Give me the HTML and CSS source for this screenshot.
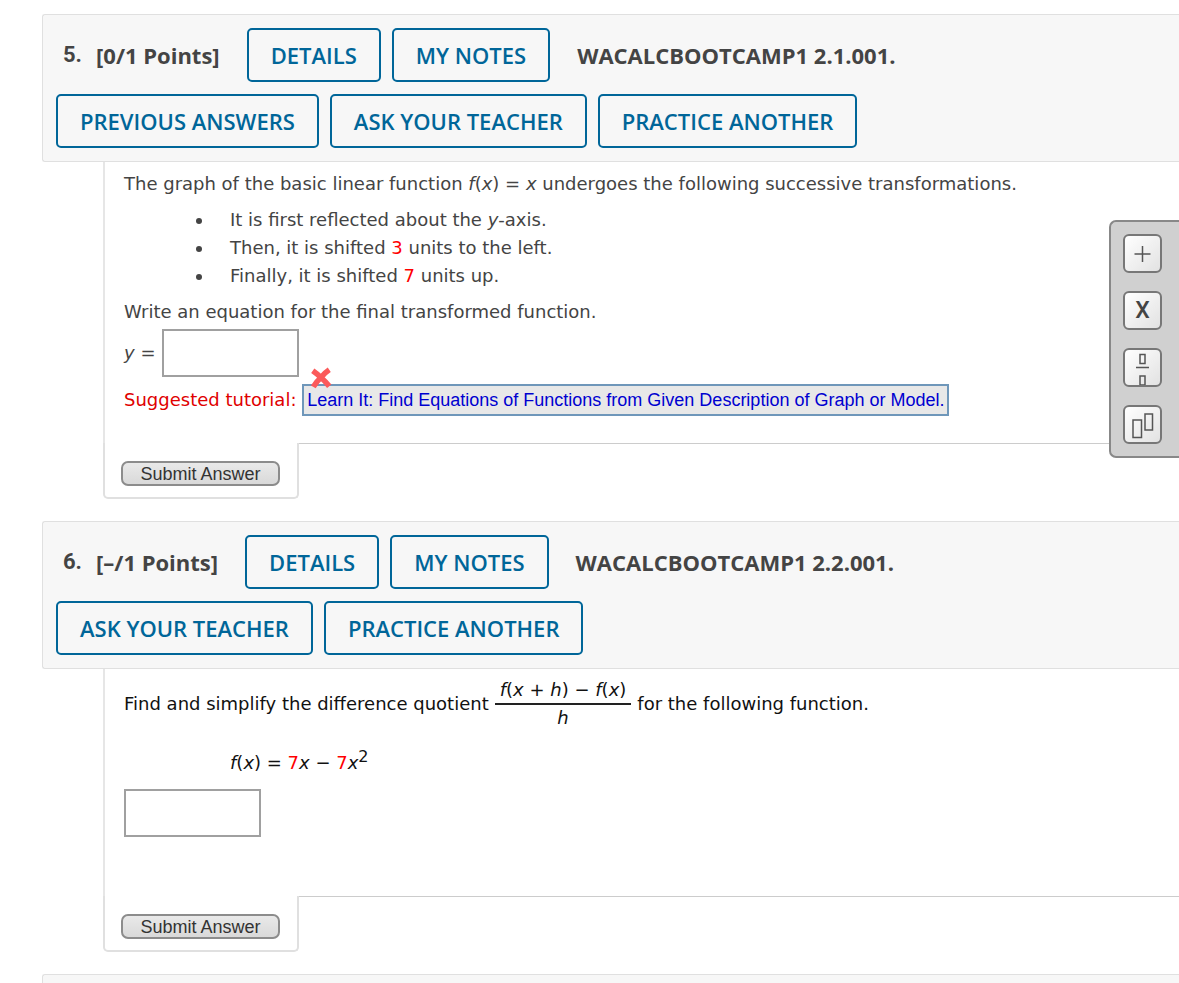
FILE: index.html
```
<!DOCTYPE html>
<html lang="en">
<head>
<meta charset="utf-8">
<title>Assignment</title>
<link rel="stylesheet" href="styles.css">
</head>
<body>
<main class="assignment">
  <section class="question">
    <header class="question-header">
      <div class="header-row">
        <h2 class="points"><span class="number">5.</span><span>[0/1 Points]</span></h2>
        <button class="action" type="button">DETAILS</button>
        <button class="action" type="button">MY NOTES</button>
        <strong class="code">WACALCBOOTCAMP1 2.1.001.</strong>
      </div>
      <div class="header-row">
        <button class="action" type="button">PREVIOUS ANSWERS</button>
        <button class="action" type="button">ASK YOUR TEACHER</button>
        <button class="action" type="button">PRACTICE ANOTHER</button>
      </div>
    </header>
    <form class="question-form">
      <div class="question-body">
        <p>The graph of the basic linear function <i>f</i>(<i>x</i>) = <i>x</i> undergoes the following successive transformations.</p>
        <ul class="steps">
          <li>It is first reflected about the <i>y</i>-axis.</li>
          <li>Then, it is shifted <span class="value">3</span> units to the left.</li>
          <li>Finally, it is shifted <span class="value">7</span> units up.</li>
        </ul>
        <p>Write an equation for the final transformed function.</p>
        <div class="answer-row">
          <label for="answer5"><i>y</i> =</label>
          <span class="answer-wrap">
            <input class="answer" id="answer5" type="text">
            <svg class="wrong" viewBox="0 0 20 20" role="img" aria-label="Incorrect">
              <path d="M2.500 3.500Q6 6 10 9.500Q13 5.500 17.500 2.500M3 18Q6 13 10 9.500Q14 13 17.500 17.500"/>
            </svg>
          </span>
        </div>
        <p class="tutorial">Suggested tutorial: <a class="tutorial-link" href="#tutorial">Learn It: Find Equations of Functions from Given Description of Graph or Model.</a></p>
      </div>
      <div class="question-foot">
        <div class="submit-tab"><button class="submit" type="button">Submit Answer</button></div>
        <div class="foot-line"></div>
      </div>
    </form>
  </section>

  <section class="question">
    <header class="question-header">
      <div class="header-row">
        <h2 class="points"><span class="number">6.</span><span>[–/1 Points]</span></h2>
        <button class="action" type="button">DETAILS</button>
        <button class="action" type="button">MY NOTES</button>
        <strong class="code">WACALCBOOTCAMP1 2.2.001.</strong>
      </div>
      <div class="header-row">
        <button class="action" type="button">ASK YOUR TEACHER</button>
        <button class="action" type="button">PRACTICE ANOTHER</button>
      </div>
    </header>
    <form class="question-form">
      <div class="question-body active">
        <p class="quotient-row">
          <span>Find and simplify the difference quotient</span>
          <span class="fraction"><span class="over"><i>f</i>(<i>x</i> + <i>h</i>) − <i>f</i>(<i>x</i>)</span><i class="under">h</i></span>
          <span>for the following function.</span>
        </p>
        <p class="formula"><i>f</i>(<i>x</i>) = <span class="value">7</span><i>x</i> − <span class="value">7</span><i>x</i><sup>2</sup></p>
        <input class="answer" type="text" aria-label="Difference quotient">
      </div>
      <div class="question-foot">
        <div class="submit-tab"><button class="submit" type="button">Submit Answer</button></div>
        <div class="foot-line"></div>
      </div>
    </form>
  </section>

  <section class="question">
    <header class="question-header"></header>
  </section>
</main>

<aside class="math-pad" aria-label="Math symbols">
  <button class="key" type="button" aria-label="Operations"><svg viewBox="0 0 35 35"><path d="M9.500 18h16M17.500 10v16"/></svg></button>
  <button class="key key-text" type="button">X</button>
  <button class="key" type="button" aria-label="Fraction"><svg viewBox="0 0 35 35"><path d="M15 4.500h5v9h-5zM11 17.500h13M15 26h5v9h-5z"/></svg></button>
  <button class="key" type="button" aria-label="Exponent"><svg viewBox="0 0 35 35"><path d="M8 13h8.500v17.500H8zM20 7h7.500v16H20z"/></svg></button>
</aside>
</body>
</html>
```
FILE: styles.css
```
* { box-sizing: border-box; }
html { overflow: hidden; }
body {
  height: 100vh;
  margin: 0;
  overflow: hidden;
  background: #fff;
  color: #444;
  font: 18px/28px "DejaVu Sans", sans-serif;
}
p, h2, ul { margin: 0; }
button, input { font: inherit; }
.assignment { padding: 14px 0 0 42px; }
.question { margin-bottom: 22px; }

.question-header {
  display: flex;
  flex-direction: column;
  gap: 12px;
  padding: 13px;
  background: #f7f7f7;
  border: 1px solid #e0e0e0;
  border-right: 0;
  border-radius: 3px 0 0 3px;
  font-family: "Open Sans", sans-serif;
}
.header-row { display: flex; align-items: center; gap: 11px; }
.points, .code {
  color: #444;
  font-size: 22px;
  font-weight: 700;
  white-space: nowrap;
}
.points { display: flex; gap: 14px; padding: 0 16px 0 7px; }
.number { font-family: Roboto, sans-serif; }
.code { padding-left: 16px; }
.action {
  height: 54px;
  padding: 0 22px;
  background: transparent;
  border: 2px solid #069;
  border-radius: 5px;
  color: #069;
  font-size: 22px;
  font-weight: 600;
  white-space: nowrap;
}

.question-form { margin-left: 61px; }
.question-body {
  min-height: 227px;
  padding: 8px 0 27px 19px;
  border-left: 2px solid #e6e6e6;
}
.question-body.active { color: #111; }
.steps { margin: 8px 0; padding-left: 90px; }
.steps li { padding-left: 16px; }
.value { color: #f00; }
.answer-row { display: flex; align-items: center; gap: 7px; margin-top: 3px; }
.answer-wrap { position: relative; display: flex; }
.answer {
  display: block;
  width: 137px;
  height: 48px;
  padding: 0 8px;
  background: #fff;
  border: 2px solid #a0a0a0;
}
.wrong {
  position: absolute;
  top: 38px;
  left: 148px;
  width: 22px;
  height: 22px;
  fill: none;
  stroke: #fb5a5a;
  stroke-width: 5;
}
.tutorial { margin-top: 7px; color: #e00000; }
.tutorial-link {
  display: inline-block;
  padding: 0 3px;
  background: #e8e8e8;
  border: 2px solid #6f97ba;
  color: #0000d0;
  font-family: "Liberation Sans", sans-serif;
  text-decoration: none;
}

.question-foot { display: flex; }
.submit-tab {
  width: 196px;
  padding: 18px 16px 11px;
  border: 2px solid #e0e0e0;
  border-top: 0;
  border-radius: 0 0 5px 5px;
}
.foot-line { flex: 1; border-top: 1px solid #ccc; }
.submit {
  display: block;
  width: 159px;
  height: 25px;
  padding: 0;
  background: linear-gradient(#e9e9e9, #d9d9d9);
  border: 2px solid #8c8c8c;
  border-radius: 7px;
  color: #333;
  font: 18px/20px "Liberation Sans", sans-serif;
}

.quotient-row { display: flex; align-items: center; gap: 6px; }
.fraction {
  display: flex;
  flex-direction: column;
  line-height: 26px;
  text-align: center;
}
.over { padding: 0 5px; border-bottom: 2px solid #222; }
.formula { margin: 18px 0 12px; padding-left: 106px; }
.formula sup { font-size: 16px; line-height: 0; }

.math-pad {
  position: fixed;
  top: 220px;
  right: 0;
  display: flex;
  flex-direction: column;
  gap: 18px;
  width: 70px;
  padding: 12px;
  background: #d0d0d0;
  border: 2px solid #888;
  border-right: 0;
  border-radius: 7px 0 0 7px;
}
.key {
  display: block;
  width: 39px;
  height: 39px;
  padding: 0;
  background: linear-gradient(135deg, #fff, #e2e2e2);
  border: 2px solid #777;
  border-radius: 6px;
  color: #444;
}
.key svg { display: block; fill: none; stroke: #555; stroke-width: 1.500; }
.key-text { font: 500 23px/32px Roboto, sans-serif; }
```
